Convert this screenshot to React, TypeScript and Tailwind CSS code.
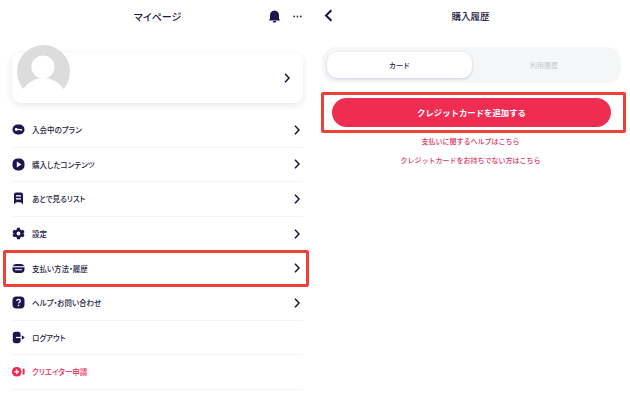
import React from 'react';

const NAVY = '#1c1650';

const Chevron: React.FC = () => (
  <svg width="6" height="10" viewBox="0 0 6 10" fill="none" className="shrink-0">
    <path d="M1 0.8 L5 5 L1 9.2" stroke="#15123a" strokeWidth="1.5" />
  </svg>
);

const KeyIcon = () => (
  <svg width="13" height="13" viewBox="0 0 13 13">
    <rect x="0.5" y="1.5" width="12" height="10" rx="5" fill={NAVY} />
    <circle cx="4.2" cy="6.5" r="1.4" fill="#fff" />
    <rect x="5" y="5.9" width="5" height="1.2" fill="#fff" />
    <rect x="8.4" y="6.5" width="1.2" height="1.5" fill="#fff" />
  </svg>
);

const PlayIcon = () => (
  <svg width="13" height="13" viewBox="0 0 13 13">
    <rect x="0.5" y="0.5" width="12" height="12" rx="5" fill={NAVY} />
    <path d="M4.8 3.6 L9.4 6.5 L4.8 9.4 Z" fill="#fff" />
  </svg>
);

const BookmarkIcon = () => (
  <svg width="13" height="13" viewBox="0 0 13 13">
    <path d="M2 2.5 Q2 0.5 4 0.5 H9 Q11 0.5 11 2.5 V12.5 L8.8 10.2 H4.2 L2 12.5 Z" fill={NAVY} />
    <rect x="4" y="3.2" width="5" height="1.3" fill="#fff" />
    <rect x="4" y="6.2" width="5" height="1.3" fill="#fff" />
  </svg>
);

const GearIcon = () => (
  <svg width="13" height="13" viewBox="0 0 13 13">
    <path
      d="M5.2 0.8 H7.8 L8.2 2.4 L9.6 3.2 L11.2 2.7 L12.5 5 L11.3 6.5 L12.5 8 L11.2 10.3 L9.6 9.8 L8.2 10.6 L7.8 12.2 H5.2 L4.8 10.6 L3.4 9.8 L1.8 10.3 L0.5 8 L1.7 6.5 L0.5 5 L1.8 2.7 L3.4 3.2 L4.8 2.4 Z"
      fill={NAVY}
    />
    <circle cx="6.5" cy="6.5" r="1.9" fill="#fff" />
  </svg>
);

const CardIcon = () => (
  <svg width="13" height="13" viewBox="0 0 13 13">
    <rect x="0.5" y="2" width="12" height="9" rx="4" fill={NAVY} />
    <rect x="0.5" y="4.2" width="12" height="1.1" fill="#fff" />
    <rect x="3" y="7.2" width="7" height="1" fill="#fff" />
  </svg>
);

const HelpIcon = () => (
  <svg width="13" height="13" viewBox="0 0 13 13">
    <rect x="0.5" y="0.5" width="12" height="12" rx="4" fill={NAVY} />
    <path d="M4.7 5 Q4.8 3.3 6.5 3.3 Q8.3 3.3 8.3 4.9 Q8.3 5.8 7.2 6.4 Q6.6 6.8 6.6 7.6" stroke="#fff" strokeWidth="1.2" fill="none" />
    <circle cx="6.6" cy="9.4" r="0.8" fill="#fff" />
  </svg>
);

const LogoutIcon = () => (
  <svg width="13" height="13" viewBox="0 0 13 13">
    <path d="M0.8 3.5 Q0.8 0.8 3.5 0.8 H6 Q8.6 0.8 8.6 3.5 V9.5 Q8.6 12.2 6 12.2 H3.5 Q0.8 12.2 0.8 9.5 Z" fill={NAVY} />
    <rect x="4" y="5.9" width="5.5" height="1.2" fill="#fff" />
    <path d="M9.8 4.2 L12.8 6.5 L9.8 8.8 Z" fill={NAVY} />
  </svg>
);

const CreatorIcon = () => (
  <svg width="13" height="13" viewBox="0 0 13 13">
    <rect x="0" y="2" width="9.5" height="9.5" rx="4.5" fill="#f02c56" />
    <rect x="4.1" y="4.4" width="1.3" height="4.7" fill="#fff" />
    <rect x="2.4" y="6.1" width="4.7" height="1.3" fill="#fff" />
    <rect x="10.6" y="3.6" width="2" height="6.2" rx="0.8" fill="#f02c56" />
  </svg>
);

const menuItems = [
  { label: '入会中のプラン', icon: <KeyIcon /> },
  { label: '購入したコンテンツ', icon: <PlayIcon /> },
  { label: 'あとで見るリスト', icon: <BookmarkIcon /> },
  { label: '設定', icon: <GearIcon /> },
  { label: '支払い方法・履歴', icon: <CardIcon />, marked: true },
  { label: 'ヘルプ・お問い合わせ', icon: <HelpIcon /> },
  { label: 'ログアウト', icon: <LogoutIcon />, noArrow: true },
  { label: 'クリエイター申請', icon: <CreatorIcon />, noArrow: true, red: true },
];

const App: React.FC = () => {
  return (
    <div
      className="w-[630px] h-[400px] overflow-hidden bg-white flex text-[#1c1a40]"
      style={{ fontFamily: '"Noto Sans CJK JP", "Noto Sans", sans-serif' }}
    >
      {/* --- My page --- */}
      <div className="w-[315px] shrink-0 flex flex-col px-3 [font-feature-settings:'palt']">
        <header className="h-[32px] relative flex items-center justify-center text-[10px] font-medium">
          マイページ
          <div className="absolute right-[1px] top-[10px] flex items-center gap-[12px]">
            <svg width="13" height="13" viewBox="0 0 13 13">
              <path d="M6.5 0.5 Q11 0.8 11 5.5 V8.5 L12 10.4 H1 L2 8.5 V5.5 Q2 0.8 6.5 0.5 Z" fill={NAVY} />
              <rect x="4.8" y="11" width="3.4" height="1.6" rx="0.8" fill={NAVY} />
            </svg>
            <svg width="9" height="3" viewBox="0 0 9 3">
              <circle cx="1.2" cy="1.5" r="0.9" fill="#333" />
              <circle cx="4.5" cy="1.5" r="0.9" fill="#333" />
              <circle cx="7.8" cy="1.5" r="0.9" fill="#333" />
            </svg>
          </div>
        </header>

        <div className="relative mt-[21px] h-[50px] rounded-[9px] bg-white shadow-[0_2px_7px_rgba(40,50,90,0.12)] flex items-center justify-end pr-[13px]">
          <svg width="53" height="53" viewBox="0 0 53 53" className="absolute left-[5px] top-[-8px]">
            <circle cx="26.5" cy="26.5" r="26.5" fill="#dcdcdc" />
            <ellipse cx="26.5" cy="56" rx="23.5" ry="23" fill="#fff" />
            <circle cx="26" cy="22" r="11.5" fill="#fff" />
          </svg>
          <Chevron />
        </div>

        <nav className="mt-[10px] flex flex-col">
          {menuItems.map(item => (
            <div
              key={item.label}
              className="relative h-[34.6px] shrink-0 flex items-center border-b border-[#f3f3f6] pr-[3px]"
            >
              <span className="w-[20px] shrink-0 flex">{item.icon}</span>
              <span className={`flex-1 text-[7.5px] font-medium ${item.red ? 'text-[#ea2f5c]' : ''}`}>{item.label}</span>
              {!item.noArrow && <Chevron />}
              {item.marked && (
                <div className="absolute left-[-9px] right-[-6px] top-[-1px] bottom-[-2px] rounded-[2px] border-[3px] border-[#ee4035]" />
              )}
            </div>
          ))}
        </nav>
      </div>

      {/* --- Purchase history --- */}
      <div className="w-[315px] shrink-0 flex flex-col pl-[7px] pr-[9px]">
        <header className="h-[32px] relative flex items-center justify-center text-[9.5px] font-medium pr-[2px]">
          <svg width="9" height="13" viewBox="0 0 9 13" className="absolute left-[2px] top-[9px]">
            <path d="M7.4 1.2 L2 6.5 L7.4 11.8" stroke="#15123a" strokeWidth="2" fill="none" />
          </svg>
          購入履歴
        </header>

        <div className="mt-[15px] h-[36px] rounded-[14px] bg-[#f5f6f8] flex items-center p-[5px] text-[7px] font-medium">
          <div className="w-[145px] h-[26px] rounded-[10px] bg-white shadow-[0_1px_3px_rgba(40,50,90,0.2)] flex items-center justify-center">
            カード
          </div>
          <div className="flex-1 flex items-center justify-center text-[#c4c8d0] font-normal">利用履歴</div>
        </div>

        <div className="relative mt-[15px] mx-[10px] h-[29px] rounded-full bg-[#ef2d53] text-white text-[8.4px] font-bold flex items-center justify-center">
          クレジットカードを追加する
          <div className="absolute left-[-11px] right-[-15px] top-[-6px] bottom-[-6px] rounded-[2px] border-[3px] border-[#ee4035]" />
        </div>

        <p className="mt-[8px] text-center text-[#d93560] text-[7px] leading-[12px] font-medium pr-[2px]">支払いに関するヘルプはこちら</p>
        <p className="mt-[7px] text-center text-[#d93560] text-[7px] leading-[12px] font-medium pr-[2px]">クレジットカードをお持ちでない方はこちら</p>
      </div>
    </div>
  );
};

export default App;
